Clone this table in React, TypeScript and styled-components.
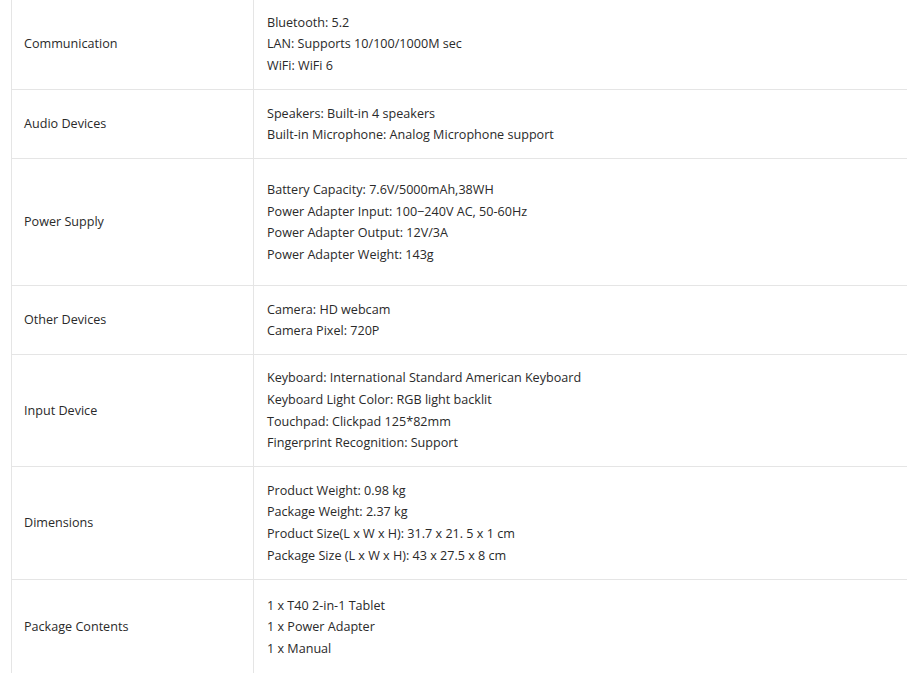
import React from "react";
import styled, { createGlobalStyle } from "styled-components";

const GlobalStyle = createGlobalStyle`
  html, body {
    margin: 0;
    padding: 0;
    background: #ffffff;
    overflow: hidden;
  }
  body {
    font-family: "Open Sans", "Noto Sans", "Liberation Sans", sans-serif;
    font-size: 12.6px;
    color: #2a2a2a;
  }
`;

const Page = styled.div`
  width: 907px;
  height: 673px;
  overflow: hidden;
  padding-left: 11px;
  box-sizing: border-box;
`;

const SpecTable = styled.div`
  width: 940px;
  margin-top: -1px;
  border-left: 1px solid #e5e5e5;
  display: flex;
  flex-direction: column;
`;

const Row = styled.div`
  display: grid;
  grid-template-columns: 242px 1fr;
  border-bottom: 1px solid #e5e5e5;
`;

const Label = styled.div`
  box-sizing: border-box;
  border-right: 1px solid #e5e5e5;
  padding: 0 12px;
  display: flex;
  align-items: center;
  line-height: 21.667px;
`;

const Value = styled.div<{ $pad?: number }>`
  padding: ${(p) => p.$pad ?? 12.5}px 13px;
  line-height: 21.667px;
  display: flex;
  flex-direction: column;
  justify-content: center;
`;

const Line = styled.div`
  white-space: nowrap;
`;

type Spec = { label: string; lines: string[]; pad?: number };

const specs: Spec[] = [
  {
    label: "Communication",
    lines: ["Bluetooth: 5.2", "LAN: Supports 10/100/1000M sec", "WiFi: WiFi 6"],
  },
  {
    label: "Audio Devices",
    lines: ["Speakers: Built-in 4 speakers", "Built-in Microphone: Analog Microphone support"],
  },
  {
    label: "Power Supply",
    lines: [
      "Battery Capacity: 7.6V/5000mAh,38WH",
      "Power Adapter Input: 100\u2212240V AC, 50-60Hz",
      "Power Adapter Output: 12V/3A",
      "Power Adapter Weight: 143g",
    ],
    pad: 19.5,
  },
  {
    label: "Other Devices",
    lines: ["Camera: HD webcam", "Camera Pixel: 720P"],
  },
  {
    label: "Input Device",
    lines: [
      "Keyboard: International Standard American Keyboard",
      "Keyboard Light Color: RGB light backlit",
      "Touchpad: Clickpad 125*82mm",
      "Fingerprint Recognition: Support",
    ],
    pad: 12,
  },
  {
    label: "Dimensions",
    lines: [
      "Product Weight: 0.98 kg",
      "Package Weight: 2.37 kg",
      "Product Size(L x W x H): 31.7 x 21. 5 x 1 cm",
      "Package Size (L x W x H): 43 x 27.5 x 8 cm",
    ],
  },
  {
    label: "Package Contents",
    lines: ["1 x T40 2-in-1 Tablet", "1 x Power Adapter", "1 x Manual"],
    pad: 15,
  },
];

export default function App() {
  return (
    <>
      <GlobalStyle />
      <Page>
        <SpecTable>
          {specs.map((s) => (
            <Row key={s.label}>
              <Label>{s.label}</Label>
              <Value $pad={s.pad}>
                {s.lines.map((l) => (
                  <Line key={l}>{l}</Line>
                ))}
              </Value>
            </Row>
          ))}
        </SpecTable>
      </Page>
    </>
  );
}
